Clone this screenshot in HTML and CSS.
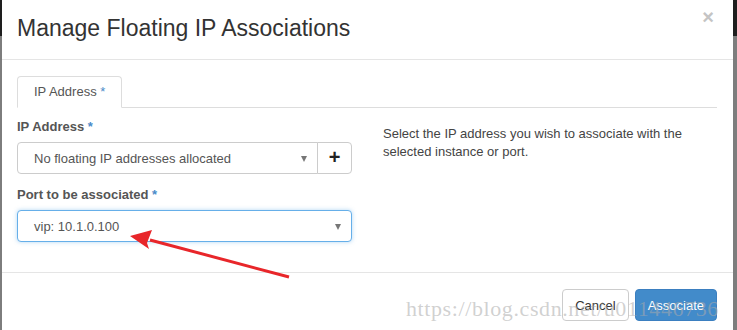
FILE: index.html
```html
<!DOCTYPE html>
<html lang="en">
<head>
  <meta charset="UTF-8" />
  <title>Manage Floating IP Associations</title>
  <link rel="stylesheet" href="styles.css">
</head>
<body>
  <div class="backdrop">
    <div class="modal">
      <div class="modal-header">
        <h3>Manage Floating IP Associations</h3>
        <span class="close">&times;</span>
      </div>

      <div class="modal-body">
        <ul class="tabs">
          <li class="tab active">IP Address <span class="req">*</span></li>
        </ul>

        <div class="pane">
          <div class="left">
            <div class="group">
              <label>IP Address <span class="req">*</span></label>
              <div class="input-group">
                <div class="select">
                  <span>No floating IP addresses allocated</span>
                  <span class="caret"></span>
                </div>
                <div class="add-btn">+</div>
              </div>
            </div>

            <div class="group">
              <label>Port to be associated <span class="req">*</span></label>
              <div class="select focus">
                <span>vip: 10.1.0.100</span>
                <span class="caret"></span>
              </div>
            </div>
          </div>

          <div class="right">
            <p>Select the IP address you wish to associate with the selected instance or port.</p>
          </div>
        </div>
      </div>

      <div class="modal-footer">
        <button class="btn">Cancel</button>
        <button class="btn primary">Associate</button>
      </div>
    </div>

    <svg class="arrow" width="737" height="330" viewBox="0 0 737 330">
      <path d="M289 277 L150 240" stroke="#e8262a" stroke-width="3" fill="none" />
      <polygon points="130,236 152,230 147,243 149,249" fill="#e8262a" />
    </svg>

    <div class="watermark">https://blog.csdn.net/u011446736</div>
  </div>
</body>
</html>
```

FILE: styles.css
```css
* {
  box-sizing: border-box;
}

body {
  margin: 0;
  font-family: "Liberation Sans", Arial, sans-serif;
  color: #333;
}

.backdrop {
  position: relative;
  width: 737px;
  height: 330px;
  overflow: hidden;
  background: linear-gradient(#1e1e1e 0, #1e1e1e 36px, #7d7d7d 36px);
  padding-left: 2px;
}

.modal {
  width: 731px;
  height: 340px;
  background: #fff;
}

.modal-header {
  position: relative;
  height: 60px;
  padding: 14px 15px 0;
  border-bottom: 1px solid #e5e5e5;
}

.modal-header h3 {
  margin: 0;
  font-size: 23px;
  font-weight: normal;
  line-height: 28px;
  color: #333;
}

.close {
  position: absolute;
  right: 19px;
  top: 6px;
  font-size: 20px;
  font-weight: bold;
  color: #c4c4c4;
}

.modal-body {
  height: 212px;
  padding: 16px 16px 0 15px;
}

.tabs {
  display: flex;
  margin: 0;
  padding: 0;
  list-style: none;
  border-bottom: 1px solid #ddd;
}

.tab {
  height: 32px;
  padding: 0 16px;
  margin-bottom: -1px;
  line-height: 30px;
  font-size: 13px;
  color: #555;
  border: 1px solid #ddd;
  border-bottom-color: #fff;
  border-radius: 4px 4px 0 0;
  background: #fff;
}

.req {
  color: #4a8bc9;
}

.pane {
  display: flex;
  gap: 31px;
  padding-top: 10px;
}

.left {
  width: 335px;
}

.group {
  margin-bottom: 12px;
}

.group label {
  display: block;
  font-size: 13px;
  font-weight: bold;
  color: #555;
  line-height: 18px;
  margin-bottom: 6px;
}

.input-group {
  display: flex;
}

.input-group .select {
  flex: 1;
  border-radius: 4px 0 0 4px;
}

.select {
  position: relative;
  height: 32px;
  padding: 0 16px;
  display: flex;
  align-items: center;
  font-size: 13px;
  color: #555;
  border: 1px solid #ccc;
  border-radius: 4px;
  background: #fff;
}

.select.focus {
  border-color: #66afe9;
  box-shadow: 0 0 4px rgba(102, 175, 233, 0.5);
}

.caret {
  position: absolute;
  right: 10px;
  top: 13px;
  width: 0;
  height: 0;
  border-left: 3px solid transparent;
  border-right: 3px solid transparent;
  border-top: 6px solid #777;
}

.add-btn {
  width: 35px;
  height: 32px;
  margin-left: -1px;
  border: 1px solid #ccc;
  border-radius: 0 4px 4px 0;
  text-align: center;
  line-height: 29px;
  font-size: 20px;
  font-weight: bold;
  color: #222;
}

.right p {
  margin: 7px 0 0;
  width: 320px;
  font-size: 13px;
  line-height: 18px;
  color: #444;
}

.modal-footer {
  display: flex;
  justify-content: flex-end;
  gap: 6px;
  padding: 16px 16px 0;
  border-top: 1px solid #e5e5e5;
}

.btn {
  height: 32px;
  padding: 0 12px;
  font-family: "Liberation Sans", Arial, sans-serif;
  font-size: 13px;
  color: #333;
  background: #fff;
  border: 1px solid #ccc;
  border-radius: 4px;
}

.btn.primary {
  color: #fff;
  background: #428bca;
  border-color: #3b7fc0;
}

.arrow {
  position: absolute;
  left: 0;
  top: 0;
  pointer-events: none;
}

.watermark {
  position: absolute;
  left: 406px;
  top: 296px;
  font-family: "Liberation Serif", serif;
  font-size: 22px;
  letter-spacing: 0.6px;
  color: rgba(170, 170, 170, 0.55);
  pointer-events: none;
}
```
